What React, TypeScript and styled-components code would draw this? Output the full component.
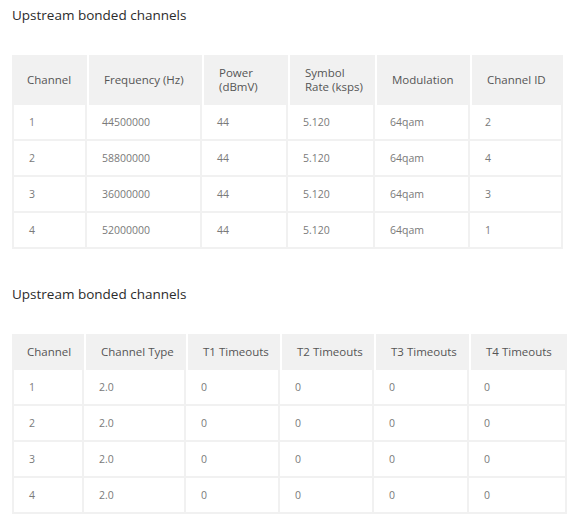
import React from "react";
import styled, { createGlobalStyle } from "styled-components";

const Global = createGlobalStyle`
  html, body { margin: 0; padding: 0; background: #fff; }
  body { font-family: "Open Sans", "DejaVu Sans", sans-serif; }
`;

const Page = styled.div`
  padding: 0 12px;
  display: flex;
  flex-direction: column;
  align-items: flex-start;
`;

const Section = styled.section<{ $first?: boolean }>`
  display: flex;
  flex-direction: column;
  margin-top: ${(p) => (p.$first ? "5px" : "35px")};
`;

const Title = styled.h2`
  margin: 0 0 30px;
  font-size: 13.5px;
  line-height: 20px;
  font-weight: 400;
  color: #2b2b2b;
`;

const Table = styled.table<{ $w: number }>`
  width: ${(p) => p.$w}px;
  border-collapse: separate;
  border-spacing: 0;
  table-layout: fixed;
`;

const Th = styled.th<{ $w: number }>`
  width: ${(p) => p.$w}px;
  box-sizing: border-box;
  background: #f1f1f1;
  color: #555;
  font-size: 11.5px;
  line-height: 14px;
  font-weight: 400;
  text-align: left;
  white-space: nowrap;
  padding: 11px 2px 11px 15px;
  vertical-align: middle;
  & + & {
    border-left: 2px solid #fff;
  }
`;

const Td = styled.td`
  height: 34px;
  padding: 0 2px 0 15px;
  font-size: 10.5px;
  color: #7a7a7a;
  vertical-align: middle;
  white-space: nowrap;
  border-bottom: 2px solid #f1f1f1;
  border-right: 2px solid #f1f1f1;
  &:first-child {
    border-left: 2px solid #f1f1f1;
  }
`;

type Col = { label: React.ReactNode; w: number };

const DataTable = ({ cols, rows }: { cols: Col[]; rows: string[][] }) => (
  <Table $w={cols.reduce((s, c) => s + c.w, 0)}>
    <thead>
      <tr>
        {cols.map((c, i) => (
          <Th key={i} $w={c.w}>
            {c.label}
          </Th>
        ))}
      </tr>
    </thead>
    <tbody>
      {rows.map((r, i) => (
        <tr key={i}>
          {r.map((v, j) => (
            <Td key={j}>{v}</Td>
          ))}
        </tr>
      ))}
    </tbody>
  </Table>
);

const cols1: Col[] = [
  { label: "Channel", w: 75 },
  { label: "Frequency (Hz)", w: 115 },
  { label: <>Power<br />(dBmV)</>, w: 86 },
  { label: <>Symbol<br />Rate (ksps)</>, w: 87 },
  { label: "Modulation", w: 95 },
  { label: "Channel ID", w: 93 },
];

const rows1 = [
  ["1", "44500000", "44", "5.120", "64qam", "2"],
  ["2", "58800000", "44", "5.120", "64qam", "4"],
  ["3", "36000000", "44", "5.120", "64qam", "3"],
  ["4", "52000000", "44", "5.120", "64qam", "1"],
];

const cols2: Col[] = [
  { label: "Channel", w: 72 },
  { label: "Channel Type", w: 102 },
  { label: "T1 Timeouts", w: 94 },
  { label: "T2 Timeouts", w: 94 },
  { label: "T3 Timeouts", w: 95 },
  { label: "T4 Timeouts", w: 98 },
];

const rows2 = [
  ["1", "2.0", "0", "0", "0", "0"],
  ["2", "2.0", "0", "0", "0", "0"],
  ["3", "2.0", "0", "0", "0", "0"],
  ["4", "2.0", "0", "0", "0", "0"],
];

export default function App() {
  return (
    <>
      <Global />
      <Page>
        <Section $first>
          <Title>Upstream bonded channels</Title>
          <DataTable cols={cols1} rows={rows1} />
        </Section>
        <Section>
          <Title>Upstream bonded channels</Title>
          <DataTable cols={cols2} rows={rows2} />
        </Section>
      </Page>
    </>
  );
}
